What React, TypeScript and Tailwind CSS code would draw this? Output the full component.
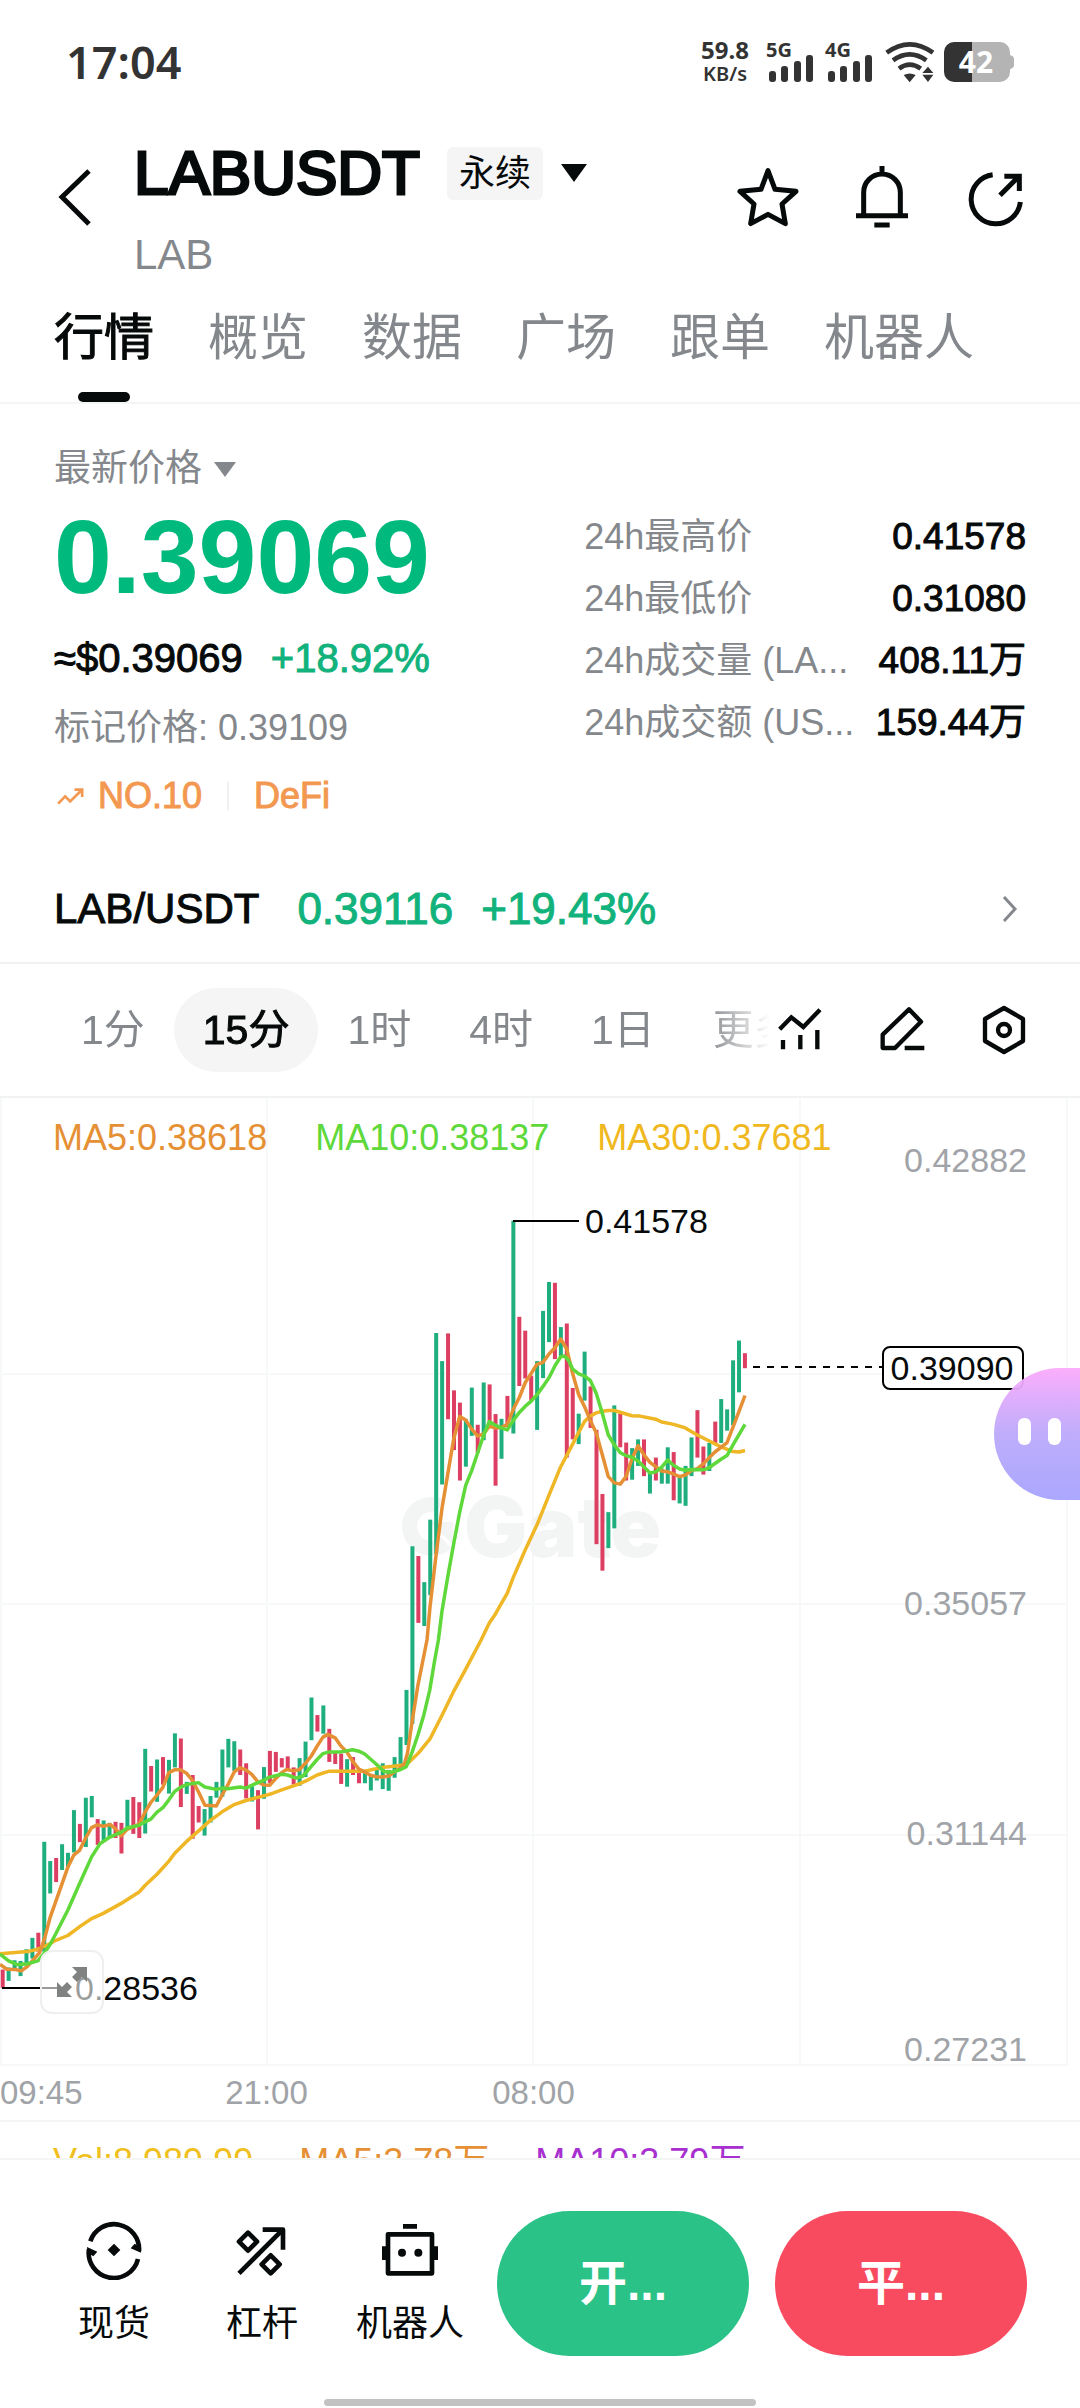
import React from 'react';

type Bar = [top: number, bottom: number, dir: 'u' | 'd'];

const UP = '#1fae7d';
const DOWN = '#dd3f62';

const STEP = 5.938;
const FIRST_X = 2.7;

/* Quiet first part of the session, in its own vertical unit. */
const earlyBars: Bar[] = [
  [957, 1010, 'd'], [951, 990, 'u'], [930, 958, 'u'], [932, 976, 'u'], [898, 945, 'u'], [865, 925, 'u'],
  [850, 905, 'd'], [586, 905, 'u'], [642, 736, 'u'], [633, 703, 'd'], [593, 668, 'u'], [618, 660, 'u'],
  [494, 617, 'u'], [534, 587, 'd'], [458, 601, 'u'], [453, 515, 'u'], [520, 595, 'd'], [524, 585, 'u'],
  [531, 575, 'u'], [528, 575, 'd'], [531, 620, 'd'], [464, 548, 'u'], [456, 563, 'd'], [471, 575, 'd'],
  [316, 562, 'u'], [366, 440, 'd'], [347, 470, 'u'], [340, 420, 'd'], [348, 446, 'u'], [271, 370, 'u'],
  [286, 485, 'd'], [412, 447, 'u'], [392, 577, 'd'], [482, 530, 'd'], [491, 568, 'u'], [453, 530, 'u'],
  [412, 458, 'u'], [318, 455, 'u'], [287, 370, 'u'], [294, 380, 'u'], [318, 392, 'd'], [358, 460, 'd'],
  [425, 469, 'u'], [436, 550, 'd'], [369, 461, 'u'], [322, 415, 'd'], [325, 383, 'd'], [343, 370, 'd'],
  [338, 375, 'd'], [370, 420, 'd'], [343, 423, 'u'], [295, 398, 'u'], [167, 291, 'u'], [218, 266, 'd'],
  [190, 272, 'u'], [258, 354, 'd'], [325, 360, 'd'], [330, 418, 'd'], [346, 426, 'u'], [340, 392, 'd'],
  [378, 416, 'd'], [385, 416, 'u'], [390, 437, 'u'], [375, 408, 'u'], [358, 433, 'u'], [378, 438, 'u'],
  [340, 400, 'u'], [282, 365, 'u'], [145, 305, 'u'],
];

/* Breakout and what follows it. */
const lateBars: Bar[] = [
  [926, 1375, 'u'], [951, 1120, 'd'], [1017, 1128, 'u'], [859, 1050, 'u'], [387, 945, 'u'], [458, 770, 'u'],
  [388, 605, 'd'], [532, 683, 'd'], [563, 760, 'd'], [605, 725, 'u'], [525, 647, 'u'], [619, 690, 'd'],
  [512, 658, 'u'], [517, 612, 'd'], [592, 773, 'd'], [604, 705, 'u'], [546, 625, 'd'], [103, 641, 'u'],
  [346, 521, 'd'], [381, 502, 'd'], [495, 558, 'd'], [458, 632, 'u'], [331, 501, 'u'], [258, 410, 'u'],
  [260, 453, 'd'], [372, 445, 'u'], [363, 702, 'd'], [526, 656, 'd'], [591, 668, 'u'], [434, 558, 'u'],
  [522, 627, 'd'], [632, 921, 'd'], [794, 988, 'd'], [840, 931, 'u'], [570, 881, 'u'], [591, 676, 'd'],
  [664, 760, 'd'], [678, 758, 'u'], [656, 723, 'u'], [656, 749, 'd'], [740, 793, 'u'], [702, 760, 'd'],
  [730, 768, 'u'], [676, 768, 'u'], [688, 810, 'd'], [750, 818, 'u'], [723, 824, 'u'], [651, 749, 'u'],
  [582, 702, 'd'], [674, 745, 'd'], [665, 736, 'u'], [611, 670, 'd'], [554, 665, 'u'], [580, 634, 'u'],
  [456, 620, 'u'], [406, 537, 'u'], [438, 476, 'd'],
];

const earlyX = (v: number) => v / 2.904;
const earlyY = (v: number) => 1640 + v / 2.904;
const lateX = (v: number) => 340 + v / 3;
const lateY = (v: number) => 1180 + v / 2.529;

const bars = [
  ...earlyBars.map(([t, b, d]) => ({ top: earlyY(t), bottom: earlyY(b), d })),
  ...lateBars.map(([t, b, d]) => ({ top: lateY(t), bottom: lateY(b), d })),
];

function points(early: string, late: string) {
  const map = (src: string, fx: (v: number) => number, fy: (v: number) => number) =>
    src.split(' ').map((p) => {
      const [x, y] = p.split(',').map(Number);
      return `${fx(x).toFixed(1)},${fy(y).toFixed(1)}`;
    });
  return [...map(early, earlyX, earlyY), ...map(late, lateX, lateY)].join(' ');
}

const ma5 = points(
  '0,942 20,956 45,957 62,961 80,948 97,928 115,908 130,865 145,808 180,708 197,660 214,625 231,611 249,575 266,545 283,537 300,541 320,536 335,548 352,569 369,550 404,535 421,500 438,472 456,450 473,428 490,385 507,377 524,377 542,387 559,408 576,440 595,480 611,481 628,482 645,450 662,420 680,383 697,371 714,377 731,390 749,412 766,421 783,422 800,403 818,385 832,376 852,380 869,377 887,358 904,337 921,308 938,282 952,274 973,284 990,308 1007,325 1024,352 1042,375 1059,383 1076,393 1093,397 1110,398 1130,395 1145,383 1162,372 1175,358 1183,330 1197,235 1214,130 1240,0',
  '270,1080 288,950 306,830 324,740 341,655 359,598 377,607 395,630 413,648 431,642 448,623 466,627 484,626 502,618 520,580 538,550 556,512 573,490 591,466 609,461 627,440 645,424 662,402 680,427 698,490 716,543 734,574 751,608 769,640 787,695 805,750 823,766 841,769 858,750 876,705 894,672 912,695 930,714 947,725 965,736 983,738 1001,744 1019,750 1036,746 1054,735 1072,730 1090,718 1108,702 1125,688 1143,676 1161,664 1179,625 1197,585 1215,545',
);
const ma10 = points(
  '0,912 25,932 50,943 80,940 110,932 128,910 145,885 162,853 197,785 231,708 266,630 290,592 318,573 352,558 369,546 404,538 421,528 438,520 456,500 473,487 490,465 507,440 524,428 542,420 576,414 595,427 628,434 645,430 662,432 697,427 714,430 731,422 766,407 783,398 818,390 835,392 860,401 880,395 904,367 921,347 938,330 956,325 990,325 1024,319 1042,323 1059,331 1093,361 1115,382 1135,384 1162,377 1180,368 1197,325 1214,275 1231,217 1248,145 1262,60 1273,0',
  '306,1090 324,1000 341,920 359,840 377,772 395,735 413,690 431,645 448,611 466,620 484,627 502,632 520,608 538,588 556,572 573,560 591,543 609,522 627,500 645,470 662,447 673,445 685,455 698,478 716,490 734,496 751,507 769,540 787,590 805,645 823,670 841,690 858,697 876,701 894,711 912,726 930,741 947,738 965,726 983,708 1001,722 1019,731 1036,734 1054,732 1090,733 1108,727 1143,706 1161,697 1179,670 1215,618',
);
const ma30 = points(
  '0,911 80,905 110,898 128,890 145,882 162,872 197,858 231,833 266,809 300,794 352,765 404,732 421,713 456,680 490,643 507,620 542,585 576,555 611,524 645,499 680,478 714,466 749,457 783,448 818,435 869,418 887,410 921,392 956,381 1059,381 1110,370 1180,362 1214,330 1248,288 1283,220 1317,150 1352,85 1397,0',
  '448,1120 466,1098 502,1045 520,1005 556,935 591,872 627,797 662,725 698,668 716,638 734,610 751,597 769,589 787,585 805,583 823,583 876,596 900,597 947,605 965,612 1001,618 1036,627 1072,645 1108,660 1143,675 1179,687 1197,688 1215,684',
);

function Signal({ label }: { label: string }) {
  return (
    <svg viewBox="0 0 46 40" className="h-10 w-[46px] overflow-visible" fill="#333">
      <text x="-1" y="15" fontSize="20" fontWeight="700" fontFamily="Noto Sans, sans-serif">{label}</text>
      <rect x="2" y="29" width="7" height="11" rx="3" />
      <rect x="14" y="24" width="7" height="16" rx="3" />
      <rect x="27" y="19" width="7" height="21" rx="3" />
      <rect x="39" y="13" width="7" height="27" rx="3" />
    </svg>
  );
}

function StatusBar() {
  return (
    <div className="flex h-[124px] items-center px-[66px] font-['Noto_Sans','Noto_Sans_CJK_SC',sans-serif] text-[#333]">
      <span className="text-[45px] leading-[60px] font-semibold">17:04</span>
      <div className="ml-auto flex items-center">
        <div className="mr-[18px] text-center text-[24px] leading-[24px] font-bold">
          <div>59.8</div>
          <div className="text-[20px] font-semibold">KB/s</div>
        </div>
        <div className="mr-[13px]"><Signal label="5G" /></div>
        <div className="mr-[13px]"><Signal label="4G" /></div>
        <svg viewBox="673 66 147 120" className="mr-[10px] h-10 w-[49px] overflow-visible" fill="none" stroke="#333" strokeWidth="14">
          <path d="M678 98Q747 48 817 98" />
          <path d="M697 121Q747 85 797 121" />
          <path d="M715 146Q747 122 780 146" />
          <path d="M729 165Q747 156 765 165L747 187Z" fill="#333" stroke="none" />
          <path d="M785 159L802 140L818 159ZM785 164H818L802 186Z" fill="#333" stroke="none" />
        </svg>
        <svg viewBox="0 0 70 40" className="h-10 w-[70px]">
          <path d="M10 0H56a10 10 0 0 1 10 10V13q4 1 4 4V23q0 3-4 4V30a10 10 0 0 1-10 10H10z" fill="#b4b4b4" />
          <path d="M10 0H28V40H10A10 10 0 0 1 0 30V10A10 10 0 0 1 10 0Z" fill="#333" />
          <text x="32" y="31" fontSize="30" fontWeight="700" textAnchor="middle" fill="#fff" fontFamily="Noto Sans, sans-serif">42</text>
        </svg>
      </div>
    </div>
  );
}

function Header() {
  return (
    <header className="flex items-start px-[54px] pt-[14px]">
      <button aria-label="返回" className="mt-[29px] mr-10">
        <svg viewBox="54 167 40 60" className="h-[60px] w-10" fill="none" stroke="#070a0a" strokeWidth="5">
          <path d="M89 171L62 197L89 224" />
        </svg>
      </button>
      <div>
        <div className="flex items-center">
          <h1 className="text-[62px] leading-[70px] [-webkit-text-stroke:3px_#070a0a]">LABUSDT</h1>
          <span className="ml-[27px] rounded-md bg-[#f5f5f5] px-3 text-[36px] leading-[53px]">永续</span>
          <button aria-label="选择合约" className="ml-[18px]">
            <svg viewBox="0 0 26 18" className="h-[18px] w-[26px]"><path d="M0 0H26L13 18Z" fill="#070a0a" /></svg>
          </button>
        </div>
        <p className="mt-[25px] text-[42px] leading-[44px] text-[#84888c]">LAB</p>
      </div>
      <div className="mt-[29px] ml-auto flex gap-[54px]">
        <button aria-label="收藏">
          <svg viewBox="234 441 180 180" className="size-[60px] overflow-visible" fill="none" stroke="#070a0a" strokeWidth="15" strokeLinejoin="round">
            <path d="M324 452L345 508L408 514L366 552L376 611L324 583L272 611L282 552L240 514L303 508Z" />
          </svg>
        </button>
        <button aria-label="提醒">
          <svg viewBox="576 441 180 180" className="size-[60px] overflow-visible" fill="none" stroke="#070a0a" strokeWidth="15">
            <path d="M611 587V517a55 55 0 0 1 110 0V587M588 587H744M666 438V460M643 615H689" />
          </svg>
        </button>
        <button aria-label="分享">
          <svg viewBox="918 441 180 180" className="size-[60px] overflow-visible" fill="none" stroke="#070a0a" strokeWidth="15">
            <path d="M998 464A74 74 0 1 0 1081 546M1020 526L1074 472M1033 469H1078V513" />
          </svg>
        </button>
      </div>
    </header>
  );
}

function Tabs() {
  const rest = ['概览', '数据', '广场', '跟单', '机器人'];
  return (
    <nav className="mt-[31px] flex items-start gap-[54px] border-b-2 border-[#f4f5f5] px-[54px] text-[50px] leading-[60px] whitespace-nowrap text-[#84888c]">
      <button className="flex flex-col items-center text-[#070a0a] [-webkit-text-stroke:1px_#070a0a]">
        行情
        <span className="mt-6 h-[10px] w-[52px] rounded-full bg-[#070a0a]" />
      </button>
      {rest.map((t) => (
        <button key={t}>{t}</button>
      ))}
    </nav>
  );
}

function Price() {
  const stats = [
    ['24h最高价', '0.41578'],
    ['24h最低价', '0.31080'],
    ['24h成交量 (LA...', '408.11万'],
    ['24h成交额 (US...', '159.44万'],
  ];
  return (
    <section className="grid grid-cols-[6fr_5fr] px-[54px] pt-10 text-[37px] leading-[50px] whitespace-nowrap">
      <div>
        <button className="flex items-center gap-3 text-[#84888c]">
          最新价格
          <svg viewBox="0 0 22 15" className="h-[15px] w-[22px]"><path d="M0 0H22L11 15Z" fill="#84888c" /></svg>
        </button>
        <p className="mt-2 text-[104px] leading-[110px] font-bold text-[#00b97c]">0.39069</p>
        <p className="mt-[21px] flex gap-7 text-[40px]">
          <span className="[-webkit-text-stroke:1px_#070a0a]">≈$0.39069</span>
          <span className="text-[#12b27c] [-webkit-text-stroke:1px_#12b27c]">+18.92%</span>
        </p>
        <p className="mt-5 text-[36px] text-[#84888c]">标记价格: 0.39109</p>
        <p className="mt-[18px] flex items-center text-[36px] text-[#f39850]">
          <svg viewBox="50 48 80 54" className="mr-[14px] ml-[3px] h-[18px] w-[27px]" fill="none" stroke="#f39850" strokeWidth="8">
            <path d="M53 98L74 76L89 91L124 57M102 56H125V78" />
          </svg>
          <span className="[-webkit-text-stroke:1px_#f39850]">NO.10</span>
          <span className="mr-[25px] ml-[25px] h-[30px] w-[2px] bg-[#f1f2f2]" />
          <span className="[-webkit-text-stroke:1px_#f39850]">DeFi</span>
        </p>
      </div>
      <dl className="mt-[62px] leading-[62px]">
        {stats.map(([k, v]) => (
          <div key={k} className="flex justify-between">
            <dt className="text-[36px] text-[#84888c]">{k}</dt>
            <dd className="[-webkit-text-stroke:1px_#070a0a]">{v}</dd>
          </div>
        ))}
      </dl>
    </section>
  );
}

function SpotRow() {
  return (
    <a href="#spot" className="mt-[35px] flex items-center border-b-2 border-[#f1f2f2] px-[54px] py-7 text-[42px] leading-[50px]">
      <span className="[-webkit-text-stroke:1px_#070a0a]">LAB/USDT</span>
      <span className="ml-[38px] text-[44px] text-[#12b27c] [-webkit-text-stroke:1px_#12b27c]">0.39116</span>
      <span className="ml-7 text-[44px] text-[#12b27c] [-webkit-text-stroke:1px_#12b27c]">+19.43%</span>
      <svg viewBox="0 0 16 26" className="mr-2 ml-auto h-[26px] w-4" fill="none" stroke="#84888c" strokeWidth="3">
        <path d="M2 1L13 13L2 25" />
      </svg>
    </a>
  );
}

function Intervals() {
  const items = ['1分', '15分', '1时', '4时', '1日', '更多'];
  return (
    <div className="flex items-center gap-2 border-b-2 border-[#f1f2f2] py-6 pr-[54px] pl-[52px]">
      <div className="flex min-w-0 flex-1 overflow-hidden [mask-image:linear-gradient(to_right,#000_calc(100%-64px),transparent)]">
        {items.map((t) => (
          <button
            key={t}
            className={
              t === '15分'
                ? 'shrink-0 rounded-full bg-[#f5f5f5] px-[29px] text-[41px] leading-[84px] text-[#070a0a] [-webkit-text-stroke:1px_#070a0a]'
                : 'shrink-0 px-[29px] text-[41px] leading-[84px] text-[#84888c]'
            }
          >
            {t}
          </button>
        ))}
      </div>
      <div className="flex gap-[58px]">
        <button aria-label="指标">
          <svg viewBox="235 84 132 132" className="size-11 overflow-visible" fill="none" stroke="#070a0a" strokeWidth="13">
            <path d="M240 148L275 112L311 141L361 89M250 180V208M302 165V208M353 150V208" />
          </svg>
        </button>
        <button aria-label="画线">
          <svg viewBox="541 82 132 132" className="size-11 overflow-visible" fill="none" stroke="#070a0a" strokeWidth="13" strokeLinejoin="round">
            <path d="M549 202V162L628 86L664 123L586 202ZM615 202H674" />
          </svg>
        </button>
        <button aria-label="设置">
          <svg viewBox="847 84 132 132" className="size-11 overflow-visible" fill="none" stroke="#070a0a" strokeWidth="13" strokeLinejoin="round">
            <path d="M913 84L970 117V183L913 216L856 183V117Z" />
            <circle cx="913" cy="150" r="18" />
          </svg>
        </button>
      </div>
    </div>
  );
}

function Chart() {
  const axis: [string, number][] = [['0.42882', 1160], ['0.35057', 1603], ['0.31144', 1833], ['0.27231', 2049]];
  return (
    <div className="relative">
      <svg viewBox="0 1098 1080 968" className="block h-auto w-full overflow-visible" fontFamily="Liberation Sans, Arial, sans-serif" fontSize="34">
        <defs>
          <linearGradient id="bot" x1="0" y1="0" x2="0" y2="1">
            <stop offset="0" stopColor="#fbaafc" />
            <stop offset="0.5" stopColor="#bba9fb" />
            <stop offset="1" stopColor="#a6a3ff" />
          </linearGradient>
        </defs>
        <g stroke="#f7f8f8" strokeWidth="2">
          <path d="M1 1098V2065M267 1098V2065M533 1098V2065M800 1098V2065M1067 1098V2065" />
          <path d="M0 1374H1067M0 1604H1067M0 1835H1067M0 2065H1067" />
        </g>
        <g fill="#f3f5f5">
          <path d="M440 1506A22 22 0 1 0 446 1543" fill="none" stroke="#f3f5f5" strokeWidth="15" />
          <path d="M430 1522H453V1545Z" />
          <text x="464" y="1557" fontSize="84" fontWeight="900" fontFamily="Inter, sans-serif">Gate</text>
        </g>
        <g strokeWidth="4">
          {bars.map((b, i) => {
            const x = FIRST_X + i * STEP;
            return <line key={i} x1={x} x2={x} y1={b.top} y2={b.bottom} stroke={b.d === 'u' ? UP : DOWN} />;
          })}
        </g>
        <g fill="none" strokeWidth="3.5" strokeLinejoin="round">
          <polyline points={ma30} stroke="#efb625" />
          <polyline points={ma5} stroke="#e59035" />
          <polyline points={ma10} stroke="#5ed83a" />
        </g>
        <path d="M513 1221H579M2 1988H70" stroke="#000" strokeWidth="2" />
        <path d="M753 1367H882" stroke="#000" strokeWidth="2" strokeDasharray="7 7" />
        <g fill="#070a0a">
          <text x="585" y="1233">0.41578</text>
          <text x="75" y="2000">0.28536</text>
        </g>
        <g fill="#a0a3a7" textAnchor="end">
          {axis.map(([t, y]) => (
            <text key={t} x="1027" y={y + 12}>{t}</text>
          ))}
        </g>
        <rect x="883" y="1347" width="140" height="42" rx="7" fill="#fff" stroke="#000" strokeWidth="2" />
        <text x="952" y="1380" textAnchor="middle" fill="#070a0a">0.39090</text>
        <path d="M1080 1368H1060A66 66 0 0 0 1060 1500H1080Z" fill="url(#bot)" opacity="0.95" />
        <rect x="1018" y="1418" width="13" height="27" rx="6" fill="#fff" />
        <rect x="1048" y="1418" width="13" height="27" rx="6" fill="#fff" />
      </svg>
      <div className="absolute top-[22px] left-[53px] flex gap-12 text-[36px] leading-[36px]">
        <span className="text-[#e59035]">MA5:0.38618</span>
        <span className="text-[#5ed83a]">MA10:0.38137</span>
        <span className="text-[#f0b820]">MA30:0.37681</span>
      </div>
      <button aria-label="全屏" className="absolute bottom-[52px] left-10 flex size-16 items-center justify-center rounded-[12px] border-2 border-[#eeefef] bg-white/60">
        <svg viewBox="0 0 30 30" className="size-[30px]" fill="#808282">
          <path d="M15 0H30V15L25 10L20 15L15 10L20 5ZM15 30H0V15L5 20L10 15L15 20L10 25Z" />
        </svg>
      </button>
    </div>
  );
}

function BottomBar() {
  return (
    <footer className="border-t-2 border-[#f4f5f5] pt-[51px]">
      <div className="flex items-start pr-[53px] pl-10">
        <nav className="mr-[13px] flex pt-[9px] text-[36px] leading-[44px] whitespace-nowrap">
          <button className="flex w-[148px] flex-col items-center gap-[22px]">
            <svg viewBox="72 57 180 180" className="size-[60px]" fill="none" stroke="#070a0a" strokeWidth="14">
              <path d="M91 121A75 75 0 0 1 237 150M234 174A75 75 0 0 1 87 145" />
              <path d="M162 128L181 147L162 166L143 147ZM212 142L224 128L243 140V155ZM81 138L112 152L100 166L82 154Z" fill="#070a0a" stroke="none" />
            </svg>
            现货
          </button>
          <button className="flex w-[148px] flex-col items-center gap-[22px]">
            <svg viewBox="515 57 180 180" className="size-[60px]" fill="none" stroke="#070a0a" strokeWidth="14">
              <path d="M536 217L662 91M607 86H668V146M563 95L590 122L563 149L536 122ZM631 163L658 190L631 217L604 190Z" strokeLinejoin="round" />
            </svg>
            杠杆
          </button>
          <button className="flex w-[148px] flex-col items-center gap-[22px]">
            <svg viewBox="960 57 180 180" className="size-[60px]" fill="none" stroke="#070a0a" strokeWidth="14">
              <path d="M984 100H1116V217H984ZM1029 76H1071M973 136V177M1127 136V177" strokeLinejoin="round" />
              <circle cx="1026" cy="155" r="12" fill="#070a0a" stroke="none" />
              <circle cx="1075" cy="155" r="12" fill="#070a0a" stroke="none" />
            </svg>
            机器人
          </button>
        </nav>
        <div className="flex flex-1 gap-[26px] text-[48px] leading-[145px] font-bold text-white">
          <button className="flex-1 rounded-full bg-[#2bc287]">开...</button>
          <button className="flex-1 rounded-full bg-[#f84b60]">平...</button>
        </div>
      </div>
      <div className="mx-auto mt-[43px] mb-[3px] h-[7px] w-2/5 rounded-full bg-[#c2c2c2]" />
    </footer>
  );
}

export default function App() {
  return (
    <main className="overflow-hidden bg-white font-['Liberation_Sans','Noto_Sans_CJK_SC',sans-serif] text-[#070a0a]">
      <StatusBar />
      <Header />
      <Tabs />
      <Price />
      <SpotRow />
      <Intervals />
      <Chart />
      <div className="grid grid-cols-[133fr_267fr_267fr_413fr] border-b-2 border-[#f4f5f5] text-[33px] leading-[54px] text-[#a0a3a7]">
        <span>09:45</span>
        <span className="text-center">21:00</span>
        <span className="text-center">08:00</span>
      </div>
      <div className="flex h-9 gap-[46px] overflow-hidden px-[53px] pt-[15px] text-[36px] leading-[50px] whitespace-nowrap">
        <span className="text-[#f0c020]">Vol:8,989.99</span>
        <span className="text-[#e59035]">MA5:3.78万</span>
        <span className="text-[#a82fd0]">MA10:3.79万</span>
      </div>
      <BottomBar />
    </main>
  );
}
